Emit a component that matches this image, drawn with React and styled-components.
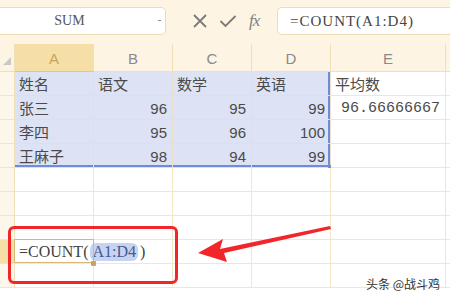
import styled, { createGlobalStyle } from 'styled-components'

const GlobalStyle = createGlobalStyle`
  html, body { margin: 0; padding: 0; background: #fff; }
  body { font-family: "Liberation Sans", "Noto Sans CJK SC", sans-serif; }
`

const COLS = [79, 79, 79, 79, 115]
const LETTERS = ['A', 'B', 'C', 'D', 'E']

const rows = [
  ['姓名', '语文', '数学', '英语', '平均数'],
  ['张三', 96, 95, 99, '96.66666667'],
  ['李四', 95, 96, 100, ''],
  ['王麻子', 98, 94, 99, ''],
  ['', '', '', '', ''],
  ['', '', '', '', ''],
  ['', '', '', '', ''],
  ['', '', '', '', ''],
  ['', '', '', '', ''],
]

const Page = styled.div`
  width: 450px;
  height: 300px;
  overflow: hidden;
  position: relative;
  background: #fff;
`

const Toolbar = styled.div`
  height: 44px;
  background: #fdf4e4;
  display: flex;
  align-items: flex-start;
  padding-top: 7px;
  box-sizing: border-box;
`

const NameBox = styled.div`
  width: 166px;
  height: 28px;
  box-sizing: border-box;
  background: #fff;
  border: 1px solid #efdcb4;
  border-left: none;
  border-radius: 0 5px 5px 0;
  display: flex;
  align-items: center;
  position: relative;
  font-family: "Liberation Serif", serif;
  font-size: 14px;
  color: #555;
  justify-content: center;
  padding-right: 26px;
`

const DropMark = styled.span`
  position: absolute;
  right: 4px;
  top: 12px;
  width: 3px;
  height: 1px;
  background: #888;
`

const IconRow = styled.div`
  width: 111px;
  height: 28px;
  display: flex;
  align-items: center;
  justify-content: flex-start;
  gap: 11px;
  padding-left: 26px;
  box-sizing: border-box;
  color: #7a7a7a;
`

const Fx = styled.span`
  font-family: "Liberation Serif", serif;
  font-style: italic;
  font-size: 17px;
  color: #808080;
  letter-spacing: -1px;
  margin-left: 1px;
`

const FormulaBox = styled.div`
  flex: 1;
  height: 28px;
  box-sizing: border-box;
  background: #fff;
  border: 1px solid #efdcb4;
  border-right: none;
  border-radius: 5px 0 0 5px;
  display: flex;
  align-items: center;
  padding-left: 12px;
  font-family: "Liberation Serif", serif;
  font-size: 15px;
  color: #444;
  letter-spacing: 1px;
`

const Sheet = styled.div`
  display: grid;
  grid-template-columns: 15px ${COLS.map((w) => `${w}px`).join(' ')} 1fr;
  grid-auto-rows: 24px;
  grid-template-rows: 28px;
`

const Corner = styled.div`
  background: #fdf4e4;
  border-right: 1px solid #f0e0b8;
  border-bottom: 1px solid #f0e0b8;
  position: relative;
  &::after {
    content: '';
    position: absolute;
    left: 3px;
    bottom: 6px;
    border-style: solid;
    border-width: 0 0 8px 8px;
    border-color: transparent transparent #c9c9c9 transparent;
  }
`

const ColHead = styled.div`
  background: ${(p) => (p.$active ? '#f6dfa6' : '#fdf4e4')};
  border-right: 1px solid #f0e0b8;
  border-bottom: 1px solid ${(p) => (p.$active ? '#e9c57a' : '#f0e0b8')};
  box-sizing: border-box;
  display: flex;
  align-items: center;
  justify-content: center;
  font-family: "Liberation Sans", sans-serif;
  font-size: 15px;
  color: ${(p) => (p.$active ? '#c9a460' : '#8a8a8a')};
  padding-top: 2px;
`

const RowHead = styled.div`
  background: ${(p) => (p.$active ? '#f6dfa6' : '#fdf6ea')};
  border-right: 1px solid #f0e0b8;
  border-bottom: 1px solid #f3e5c4;
  box-sizing: border-box;
`

const Cell = styled.div`
  position: relative;
  box-sizing: border-box;
  background: ${(p) => (p.$sel ? '#dde3f4' : '#fff')};
  border-right: 1px solid ${(p) => (p.$sel ? '#eadfc8' : '#f5e6c4')};
  border-bottom: 1px solid ${(p) => (p.$sel ? '#eadfc8' : '#f5e6c4')};
  box-shadow: ${(p) =>
    [
      p.$selRight && 'inset -2px 0 0 #6f8bd9',
      p.$selBottom && 'inset 0 -2px 0 #6f8bd9',
    ]
      .filter(Boolean)
      .join(', ') || 'none'};
  display: flex;
  align-items: center;
  justify-content: ${(p) => (p.$num ? 'flex-end' : 'flex-start')};
  padding: ${(p) => (p.$num ? '1px 5px 0 0' : '0 0 0 4px')};
  font-family: ${(p) =>
    p.$mono
      ? '"Liberation Mono", monospace'
      : p.$num
      ? '"Liberation Sans", sans-serif'
      : '"Noto Sans CJK SC", sans-serif'};
  font-size: 15px;
  color: #4a4a4a;
  white-space: nowrap;
  overflow: visible;
  z-index: ${(p) => (p.$active ? 2 : 0)};
`

const ActiveFrame = styled.div`
  position: absolute;
  inset: -1px -1px 0 -1px;
  border: 1px solid #d9b873;
  pointer-events: none;
`

const Handle = styled.span`
  position: absolute;
  right: -3px;
  bottom: -3px;
  width: 5px;
  height: 5px;
  border-radius: 1px;
  background: ${(p) => p.$color};
  z-index: 3;
`

const FormulaText = styled.span`
  font-family: "Liberation Serif", serif;
  font-size: 16px;
  color: #3f3f3f;
  letter-spacing: 0;
  display: flex;
  align-items: center;
`

const RefPill = styled.span`
  background: #c8d4ef;
  border-radius: 6px;
  padding: 0 2px;
  margin: 0 2px;
  color: #425a95;
`

const RedBox = styled.div`
  position: absolute;
  left: 8px;
  top: 226px;
  width: 170px;
  height: 58px;
  box-sizing: border-box;
  border: 3px solid #f2262a;
  border-radius: 6px;
  pointer-events: none;
`

const Arrow = styled.svg`
  position: absolute;
  left: 190px;
  top: 215px;
  pointer-events: none;
`

const Watermark = styled.div`
  position: absolute;
  right: 10px;
  bottom: 8px;
  font-family: "Noto Sans CJK SC", sans-serif;
  font-size: 12px;
  color: #333;
  text-shadow: 0 0 2px #fff;
`

const XIcon = () => (
  <svg width="16" height="16" viewBox="0 0 16 16">
    <path d="M2 2 L14 14 M14 2 L2 14" stroke="#7a7a7a" strokeWidth="1.8" fill="none" />
  </svg>
)

const CheckIcon = () => (
  <svg width="18" height="16" viewBox="0 0 18 16">
    <path d="M1.5 8 L6.5 13 L16.5 3" stroke="#7a7a7a" strokeWidth="1.8" fill="none" />
  </svg>
)

const App = () => {
  return (
    <Page>
      <GlobalStyle />
      <Toolbar>
        <NameBox>
          SUM
          <DropMark />
        </NameBox>
        <IconRow>
          <XIcon />
          <CheckIcon />
          <Fx>fx</Fx>
        </IconRow>
        <FormulaBox>=COUNT(A1:D4)</FormulaBox>
      </Toolbar>
      <Sheet>
        <Corner />
        {LETTERS.map((l, i) => (
          <ColHead key={l} $active={i === 0}>
            {l}
          </ColHead>
        ))}
        <ColHead />
        {rows.map((r, ri) => (
          <Row key={ri} ri={ri} r={r} />
        ))}
      </Sheet>
      <RedBox />
      <Arrow width="150" height="50" viewBox="0 0 150 50">
        <path
          d="M140 11 L30 34 L33 24 L8 38 L37 47 L34 38 L141 14 Z"
          fill="#f2262a"
        />
      </Arrow>
      <Watermark>头条 @战斗鸡</Watermark>
    </Page>
  )
}

const Row = ({ ri, r }) => {
  const activeRow = ri === 7
  return (
    <>
      <RowHead $active={activeRow} />
      {r.map((v, ci) => {
        const sel = ri <= 3 && ci <= 3
        const num = typeof v === 'number' || (ci === 4 && ri === 1)
        if (activeRow && ci === 0) {
          return (
            <Cell key={ci} $active>
              <ActiveFrame />
              <Handle $color="#c9a460" />
              <FormulaText>
                =COUNT(<RefPill>A1:D4</RefPill>)
              </FormulaText>
            </Cell>
          )
        }
        return (
          <Cell
            key={ci}
            $sel={sel}
            $selRight={sel && ci === 3}
            $selBottom={sel && ri === 3}
            $num={num}
            $mono={ci === 4 && ri === 1}
          >
            {v}
            {sel && ci === 3 && ri === 3 && <Handle $color="#6f8bd9" />}
          </Cell>
        )
      })}
      <Cell />
    </>
  )
}

export default App
